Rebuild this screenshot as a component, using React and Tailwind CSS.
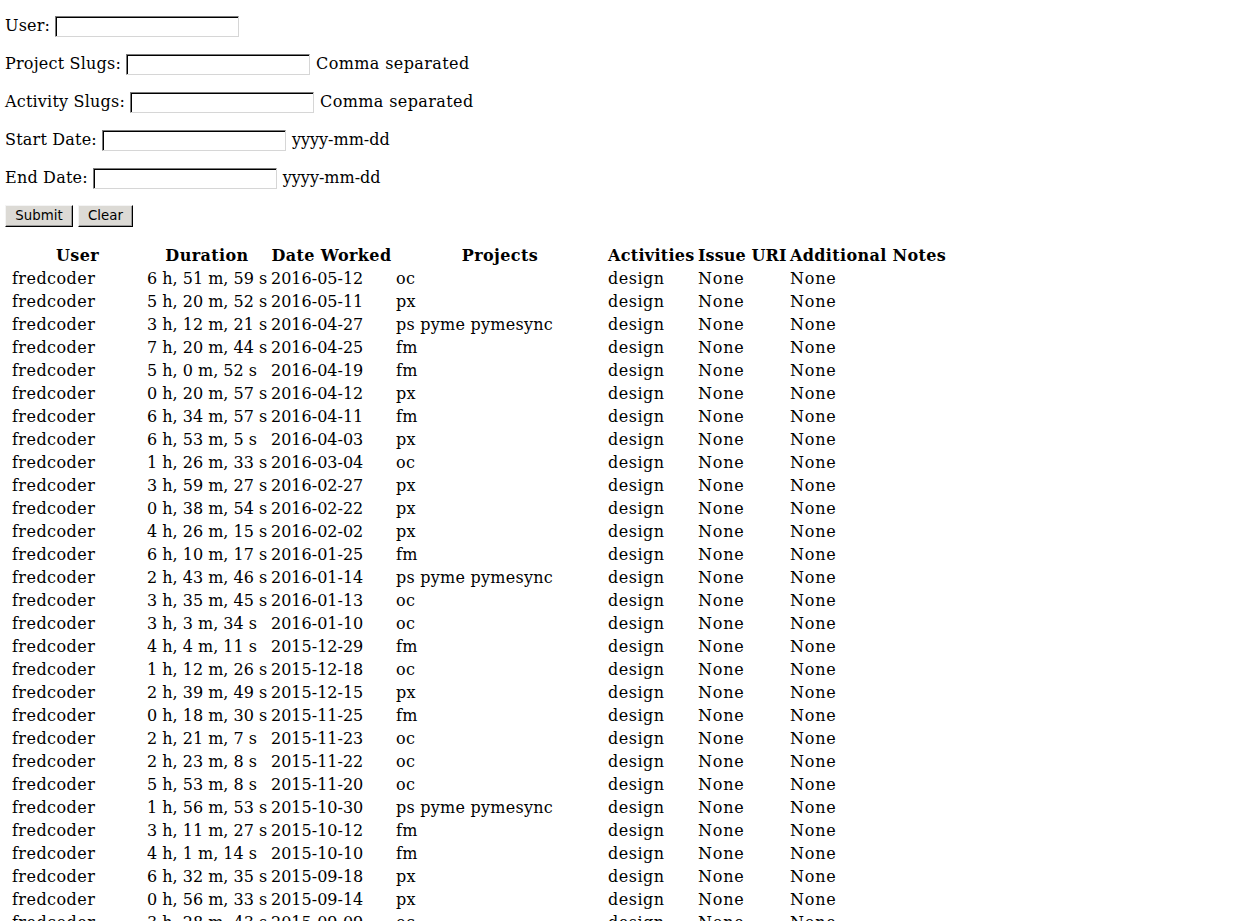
import React from "react";

const rows = [
  ["6 h, 51 m, 59 s", "2016-05-12", "oc"],
  ["5 h, 20 m, 52 s", "2016-05-11", "px"],
  ["3 h, 12 m, 21 s", "2016-04-27", "ps pyme pymesync"],
  ["7 h, 20 m, 44 s", "2016-04-25", "fm"],
  ["5 h, 0 m, 52 s", "2016-04-19", "fm"],
  ["0 h, 20 m, 57 s", "2016-04-12", "px"],
  ["6 h, 34 m, 57 s", "2016-04-11", "fm"],
  ["6 h, 53 m, 5 s", "2016-04-03", "px"],
  ["1 h, 26 m, 33 s", "2016-03-04", "oc"],
  ["3 h, 59 m, 27 s", "2016-02-27", "px"],
  ["0 h, 38 m, 54 s", "2016-02-22", "px"],
  ["4 h, 26 m, 15 s", "2016-02-02", "px"],
  ["6 h, 10 m, 17 s", "2016-01-25", "fm"],
  ["2 h, 43 m, 46 s", "2016-01-14", "ps pyme pymesync"],
  ["3 h, 35 m, 45 s", "2016-01-13", "oc"],
  ["3 h, 3 m, 34 s", "2016-01-10", "oc"],
  ["4 h, 4 m, 11 s", "2015-12-29", "fm"],
  ["1 h, 12 m, 26 s", "2015-12-18", "oc"],
  ["2 h, 39 m, 49 s", "2015-12-15", "px"],
  ["0 h, 18 m, 30 s", "2015-11-25", "fm"],
  ["2 h, 21 m, 7 s", "2015-11-23", "oc"],
  ["2 h, 23 m, 8 s", "2015-11-22", "oc"],
  ["5 h, 53 m, 8 s", "2015-11-20", "oc"],
  ["1 h, 56 m, 53 s", "2015-10-30", "ps pyme pymesync"],
  ["3 h, 11 m, 27 s", "2015-10-12", "fm"],
  ["4 h, 1 m, 14 s", "2015-10-10", "fm"],
  ["6 h, 32 m, 35 s", "2015-09-18", "px"],
  ["0 h, 56 m, 33 s", "2015-09-14", "px"],
  ["3 h, 28 m, 43 s", "2015-09-09", "oc"],
];

function Field({ label, hint, wide }) {
  return (
    <div className="flex items-center h-[22px] mb-[16px]">
      <span className="tracking-[0.2px]">{label}</span>
      <input
        type="text"
        className="ml-[5px] w-[184px] h-[21px] bg-white border border-t-[#7a7a7a] border-l-[#7a7a7a] border-b-[#d6d6d6] border-r-[#d6d6d6] shadow-[inset_1px_1px_0_#000] outline-none"
      />
      {hint && (
        <span className={wide ? "ml-[6px] tracking-[0.4px]" : "ml-[6px]"}>{hint}</span>
      )}
    </div>
  );
}

function Btn({ children, w }) {
  return (
    <button
      className={`${w} h-[22px] bg-[#dcdad5] text-[13.33px] font-['DejaVu_Sans',sans-serif] border border-t-[#f4f4f4] border-l-[#f4f4f4] border-b-black border-r-black shadow-[inset_-1px_-1px_0_#9a9a9a]`}
    >
      {children}
    </button>
  );
}

export default function App() {
  return (
    <div className="min-h-screen bg-white text-black text-[16px] font-['DejaVu_Serif',serif]">
      <div className="pl-[5px] pt-[15px]">
        <Field label="User:" />
        <Field label="Project Slugs:" hint="Comma separated" wide />
        <Field label="Activity Slugs:" hint="Comma separated" wide />
        <Field label="Start Date:" hint="yyyy-mm-dd" />
        <Field label="End Date:" hint="yyyy-mm-dd" />
        <div className="flex gap-[5px]">
          <Btn w="w-[68px]">Submit</Btn>
          <Btn w="w-[55px]">Clear</Btn>
        </div>
      </div>

      <table className="ml-[9px] mt-[16px] table-fixed border-separate border-spacing-[2px] w-[940px] leading-[19px]">
        <thead>
          <tr>
            <th className="w-[133px] p-[1px] font-bold text-center tracking-[0.4px]">User</th>
            <th className="w-[122px] p-[1px] font-bold text-center tracking-[0.4px]">Duration</th>
            <th className="w-[123px] p-[1px] font-bold text-center whitespace-nowrap tracking-[0.4px]">Date Worked</th>
            <th className="w-[210px] p-[1px] font-bold text-center tracking-[0.4px]">Projects</th>
            <th className="w-[88px] p-[1px] font-bold text-center tracking-[0.3px]">Activities</th>
            <th className="w-[90px] p-[1px] font-bold text-center whitespace-nowrap tracking-[0.1px]">Issue URI</th>
            <th className="w-[158px] p-[1px] font-bold text-center whitespace-nowrap tracking-[0.35px]">Additional Notes</th>
          </tr>
        </thead>
        <tbody>
          {rows.map((r, i) => (
            <tr key={i}>
              <td className="p-[1px] tracking-[0.45px]">fredcoder</td>
              <td className="p-[1px] whitespace-nowrap">{r[0]}</td>
              <td className="p-[1px]">{r[1]}</td>
              <td className="p-[1px] tracking-[0.25px]">{r[2]}</td>
              <td className="p-[1px] tracking-[0.5px]">design</td>
              <td className="p-[1px] tracking-[0.8px]">None</td>
              <td className="p-[1px] tracking-[0.8px]">None</td>
            </tr>
          ))}
        </tbody>
      </table>
    </div>
  );
}
